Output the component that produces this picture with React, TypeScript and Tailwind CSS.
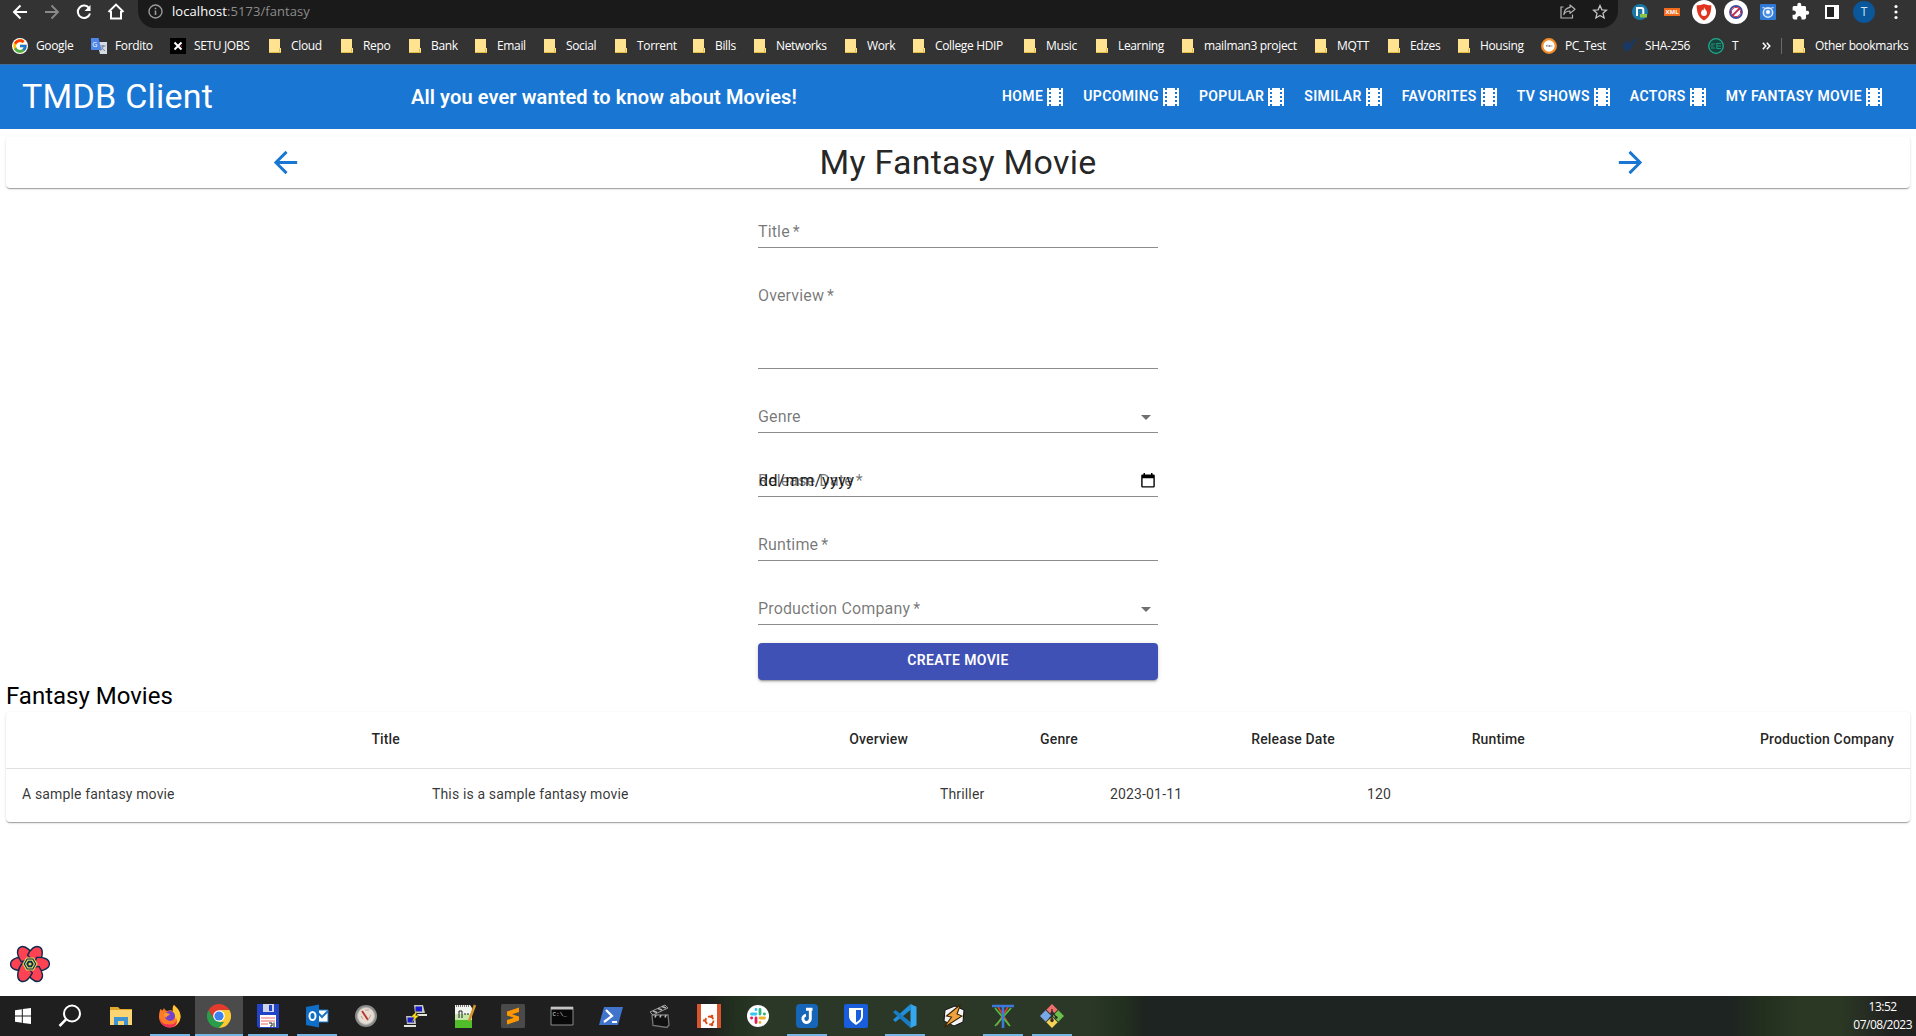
import React from "react";
import { FcGoogle } from "react-icons/fc";

type Children = { children?: React.ReactNode };

const UI_FONT = "font-['Open_Sans','Noto_Sans',sans-serif]";

function Cell({ children }: Children) {
  return <div className="flex h-[23px] w-8 shrink-0 items-center justify-center">{children}</div>;
}

function AddressBar() {
  return (
    <div className="flex h-7 items-start bg-[#333333] pl-1">
      <Cell>
        <svg width="16" height="16" viewBox="0 0 16 16" fill="none" stroke="#fff" strokeWidth="2"><path d="M15 8H2.500M8.500 1.500 2 8l6.500 6.500" /></svg>
      </Cell>
      <Cell>
        <svg width="16" height="16" viewBox="0 0 16 16" fill="none" stroke="#8a8a8a" strokeWidth="1.800"><path d="M1 8h12.500M7.500 1.500 14 8l-6.500 6.500" /></svg>
      </Cell>
      <Cell>
        <svg width="16" height="16" viewBox="0 0 16 16" fill="none" stroke="#fff" strokeWidth="2"><path d="M13.300 4.500A6.200 6.200 0 1 0 14 9.500" /><path d="M14.500 1v6h-6z" fill="#fff" stroke="none" /></svg>
      </Cell>
      <Cell>
        <svg width="18" height="17" viewBox="0 0 18 17" fill="none" stroke="#fff" strokeWidth="2"><path d="M4 8v7.500h10V8M1.500 9 9 1.600 16.500 9" /></svg>
      </Cell>
      <div className="ml-[6px] flex h-7 w-[1480px] items-start rounded-b-[17px] bg-[#1a1a1a]">
        <div className="flex h-[23px] grow items-center pl-[10px]">
          <svg width="15" height="15" viewBox="0 0 15 15" fill="none" stroke="#9a9a9a" strokeWidth="1.400"><circle cx="7.500" cy="7.500" r="6.500" /><path d="M7.500 6.500v4.500M7.500 3.700v1.500" strokeWidth="1.600" /></svg>
          <span className="mb-[2px] ml-[9px] text-[13px] leading-[22px] tracking-[0.06px] whitespace-nowrap text-[#8c8c8c]">
            <span className="text-white">localhost</span>:5173/fantasy
          </span>
        </div>
        <Cell>
          <svg width="16" height="15" viewBox="0 0 16 15" fill="none" stroke="#b4b4b4" strokeWidth="1.200"><path d="M3.500 3H1v11h11.500v-3.500" /><path d="M10 1l5 4.200-5 4.200V7C7 7 5.200 8 3.800 10.500 4.200 6.500 6.500 3.800 10 3.400z" strokeLinejoin="round" /></svg>
        </Cell>
        <Cell>
          <svg width="16" height="16" viewBox="0 0 16 16" fill="none" stroke="#c4c4c4" strokeWidth="1.300"><path d="m8 1.500 1.900 4.300 4.600.4-3.500 3.100 1.100 4.700L8 11.500 3.900 14 5 9.300 1.500 6.200l4.600-.4z" /></svg>
        </Cell>
        <div className="w-[2px]" />
      </div>
      <div className="flex pl-[6px]">
        <Cell>
          <svg width="16" height="16" viewBox="0 0 16 16"><circle cx="8" cy="8" r="8" fill="#1978a8" /><path d="M5 12V4h4.500c1.200 0 1.800.7 1.800 2V10" fill="none" stroke="#fff" strokeWidth="2" /><path d="M8 10h7v3.500H8z" fill="#8bc53f" /></svg>
        </Cell>
        <Cell>
          <div className="flex h-[8px] w-4 items-center justify-center bg-[#f26a1b] text-[6px] leading-none font-bold text-white">XML</div>
        </Cell>
        <Cell>
          <svg className="shrink-0" width="24" height="24" viewBox="0 0 24 24"><circle cx="12" cy="12" r="12" fill="#fff" /><path d="M12 4c2.500 1 4.800 1.300 7.300 1.300 0 7.500-1.700 12-7.300 15.200-5.600-3.200-7.300-7.700-7.300-15.200C7.200 5.300 9.500 5 12 4z" fill="#e2331f" /><path d="M12 7c.5 2.500 3 3 3 6a3 3 0 0 1-6 0c0-1.500 1-2 1.200-3.500l1 1C12 9.500 12 8 12 7z" fill="#fff" /></svg>
        </Cell>
        <Cell>
          <svg className="shrink-0" width="24" height="24" viewBox="0 0 24 24" fill="none"><circle cx="12" cy="12" r="12" fill="#fff" /><circle cx="12" cy="12" r="6" stroke="#3e4c9c" strokeWidth="1.800" /><circle cx="12" cy="12" r="4.600" stroke="#d8304e" strokeWidth="1" /><path d="m8 16 8-8" stroke="#c2304f" strokeWidth="1.800" /></svg>
        </Cell>
        <Cell>
          <svg width="16" height="16" viewBox="0 0 16 16"><rect width="16" height="16" rx="1" fill="#2f7ad6" /><circle cx="8" cy="8.500" r="4.700" fill="#4f90e2" stroke="#dceafc" strokeWidth="1.500" /><path d="M2.500 3.500 6 4.500h4l3.500-1" stroke="#dceafc" strokeWidth="1.200" fill="none" /><circle cx="8" cy="8" r="2" fill="#fff" /></svg>
        </Cell>
        <Cell>
          <svg width="19" height="19" viewBox="0 0 24 24" fill="#fff"><path d="M20.500 11H19V7c0-1.100-.9-2-2-2h-4V3.500a2.500 2.500 0 0 0-5 0V5H4c-1.100 0-1.990.9-1.990 2v3.800H3.500c1.490 0 2.700 1.210 2.700 2.700s-1.210 2.700-2.700 2.700H2V20c0 1.100.9 2 2 2h3.800v-1.500c0-1.490 1.210-2.700 2.700-2.700s2.700 1.210 2.700 2.700V22H17c1.100 0 2-.9 2-2v-4h1.500a2.500 2.500 0 0 0 0-5z" /></svg>
        </Cell>
        <Cell>
          <div className="h-[14px] w-[14px] border-2 border-r-[5px] border-white bg-[#222]" />
        </Cell>
        <Cell>
          <div className="flex h-[22px] w-[22px] shrink-0 items-center justify-center rounded-full bg-[#0a579c] text-[12px] text-[#cfe3f5]">T</div>
        </Cell>
        <Cell>
          <svg width="4" height="16" viewBox="0 0 4 16" fill="#fff"><circle cx="2" cy="2.500" r="1.600" /><circle cx="2" cy="8" r="1.600" /><circle cx="2" cy="13.500" r="1.600" /></svg>
        </Cell>
      </div>
    </div>
  );
}

function Folder() {
  return (
    <svg width="12" height="14" viewBox="0 0 12 14"><path d="M0 0h11v9h1v5H0z" fill="#ffe391" /><path d="M0 13.500h12M10.500 9.500v4" stroke="#e5bd45" fill="none" /></svg>
  );
}

const translateIcon = (
  <svg width="16" height="16" viewBox="0 0 16 16"><path d="M6 4h10v12H9z" fill="#d6dbe2" /><path d="M0 0h7.500l3 12H0z" fill="#4f86ec" /><path d="M9.500 8h5M12 7v1c0 2-1 3.500-2.500 4.500M10.500 9.500c1 1.500 2 2.500 3.500 3" stroke="#6d7d92" fill="none" /><text x="1.300" y="9" fontSize="7" fill="#fff" fontFamily="Open Sans">G</text></svg>
);
const setuIcon = (
  <svg width="16" height="16" viewBox="0 0 16 16"><path fill="#000" d="M0 0h16v16H0z" /><path d="m4.500 4.500 7 7M11.500 4.500l-7 7" stroke="#fff" strokeWidth="2" /><path d="m10.500 7.500 1.500 1" stroke="#d23" /></svg>
);
const clockIcon = (
  <svg width="16" height="16" viewBox="0 0 16 16"><circle cx="8" cy="8" r="6.800" fill="#fff" stroke="#f28c28" strokeWidth="2.300" /><path d="M5 8h6.500M5 8l1.500-1M8.500 7v2" stroke="#777" strokeWidth=".8" fill="none" /></svg>
);
const hashIcon = (
  <svg width="16" height="16" viewBox="0 0 16 16" fill="none" stroke="#173a6b" strokeWidth="2"><path d="m2 9 3-4-1 8 5-9-1 8 6-11" /></svg>
);
const chipIcon = (
  <svg width="16" height="16" viewBox="0 0 16 16" fill="none" stroke="#1fae8d"><circle cx="8" cy="8" r="7.300" fill="#17433d" strokeWidth="1.300" /><path d="M3 6h4M2.500 8h3M3 10h4M9 5.500h4M9 8h4M9 10.500h4M8.800 5v6" strokeWidth=".8" /></svg>
);

const bookmarks: { label: string; slot: string; icon?: React.ReactNode }[] = [
  { label: "Google", slot: "w-[79px]", icon: <FcGoogle size={16} className="rounded-full bg-white" /> },
  { label: "Fordito", slot: "w-[79px]", icon: translateIcon },
  { label: "SETU JOBS", slot: "w-[97px]", icon: setuIcon },
  { label: "Cloud", slot: "w-[72px]" },
  { label: "Repo", slot: "w-[68px]" },
  { label: "Bank", slot: "w-[66px]" },
  { label: "Email", slot: "w-[69px]" },
  { label: "Social", slot: "w-[71px]" },
  { label: "Torrent", slot: "w-[78px]" },
  { label: "Bills", slot: "w-[61px]" },
  { label: "Networks", slot: "w-[91px]" },
  { label: "Work", slot: "w-[68px]" },
  { label: "College HDIP", slot: "w-[111px]" },
  { label: "Music", slot: "w-[72px]" },
  { label: "Learning", slot: "w-[86px]" },
  { label: "mailman3 project", slot: "w-[133px]" },
  { label: "MQTT", slot: "w-[73px]" },
  { label: "Edzes", slot: "w-[70px]" },
  { label: "Housing", slot: "w-[85px]" },
  { label: "PC_Test", slot: "w-[80px]", icon: clockIcon },
  { label: "SHA-256", slot: "w-[87px]", icon: hashIcon },
  { label: "T", slot: "w-[54px]", icon: chipIcon },
];

function BookmarksBar() {
  return (
    <div className="flex h-9 items-center bg-[#333333] pb-px pl-3 text-[12px] tracking-[-0.35px] whitespace-nowrap text-white">
      {bookmarks.map((b) => (
        <div key={b.label} className={`flex shrink-0 items-center gap-2 ${b.slot}`}>
          <span className="flex w-4 shrink-0 justify-center">{b.icon ?? <Folder />}</span>
          <span>{b.label}</span>
        </div>
      ))}
      <svg width="9" height="8" viewBox="0 0 9 8" fill="none" stroke="#fff" strokeWidth="1.500"><path d="m.8.800 3 3.200-3 3.200M4.800.800l3 3.200-3 3.200" /></svg>
      <div className="ml-[10px] h-4 w-px bg-[#6b6b6b]" />
      <div className="ml-[9px] flex items-center gap-2">
        <span className="flex w-4 justify-center"><Folder /></span>
        <span>Other bookmarks</span>
      </div>
    </div>
  );
}

const navItems = ["Home", "Upcoming", "Popular", "Similar", "Favorites", "TV Shows", "Actors", "My Fantasy Movie"];

function AppHeader() {
  return (
    <header className="flex h-[65px] items-center border-t border-[#3f6c98] bg-[#1976d2] pr-[22px] pb-px pl-[22px] text-white">
      <div className="w-[389px] pb-[2px] text-[34px] leading-[42px] tracking-[0.25px]">TMDB Client</div>
      <div className="grow pt-px text-[20px] leading-8 font-semibold tracking-[0.1px]">All you ever wanted to know about Movies!</div>
      <nav className="flex">
        {navItems.map((item) => (
          <a key={item} className="flex items-center px-2 text-[14px] leading-6 font-semibold tracking-[0.37px] whitespace-nowrap uppercase">
            <span className="pb-px">{item}</span>
            <svg className="mt-px" width="24" height="24" viewBox="0 0 24 24" fill="currentColor"><path d="M18 3v2h-2V3H8v2H6V3H4v18h2v-2h2v2h8v-2h2v2h2V3h-2zM8 17H6v-2h2v2zm0-4H6v-2h2v2zm0-4H6V7h2v2zm10 8h-2v-2h2v2zm0-4h-2v-2h2v2zm0-4h-2V7h2v2z" /></svg>
          </a>
        ))}
      </nav>
    </header>
  );
}

const PAPER = "rounded bg-white shadow-[0px_2px_1px_-1px_rgba(0,0,0,0.2),0px_1px_1px_0px_rgba(0,0,0,0.14),0px_1px_3px_0px_rgba(0,0,0,0.12)]";

function PageTitle() {
  return (
    <div className={`mx-[6px] mt-2 flex h-[51px] items-center justify-around ${PAPER}`}>
      <button className="flex w-[51px] justify-center text-[#1976d2]">
        <svg width="35" height="35" viewBox="0 0 24 24" fill="currentColor"><path d="M20 11H7.830l5.590-5.590L12 4l-8 8 8 8 1.410-1.410L7.830 13H20v-2z" /></svg>
      </button>
      <h1 className="mb-[2px] text-[34px] leading-[42px] tracking-[0.25px] text-black/87">My Fantasy Movie</h1>
      <button className="flex w-[51px] justify-center text-[#1976d2]">
        <svg width="35" height="35" viewBox="0 0 24 24" fill="currentColor"><path d="m12 4-1.410 1.410L16.170 11H4v2h12.170l-5.580 5.590L12 20l8-8z" /></svg>
      </button>
    </div>
  );
}

function Field({ label, required, tall, children }: Children & { label: string; required?: boolean; tall?: boolean }) {
  return (
    <div className={`mb-4 flex border-b border-[#8c8c8c] pt-5 text-[16px] leading-[23px] tracking-[0.15px] text-black/54 ${tall ? "h-[105px]" : "h-12"}`}>
      <label className="flex grow gap-[3px] whitespace-nowrap">{label}{required && <span>*</span>}</label>
      {children}
    </div>
  );
}

function Caret() {
  return (
    <svg width="24" height="24" viewBox="0 0 24 24" fill="#6f6f6f"><path d="m7 10 5 5 5-5z" /></svg>
  );
}

function MovieForm() {
  return (
    <form className="mx-auto mt-3 w-[400px]">
      <Field label="Title" required />
      <Field label="Overview" required tall />
      <Field label="Genre"><Caret /></Field>
      <div className="relative">
        <Field label="Release Date" required>
          <svg className="mt-1 mr-[3px]" width="14" height="16" viewBox="0 0 14 16" fill="#000"><path d="M2.500 0h1.500v2h-1.500zM10 0h1.500v2H10z" /><path fillRule="evenodd" d="M1.500 1.500h11a1.300 1.300 0 0 1 1.300 1.300v10.400a1.300 1.300 0 0 1-1.300 1.300h-11A1.300 1.300 0 0 1 .2 13.200V2.800a1.300 1.300 0 0 1 1.300-1.300zM1.600 5.200v8h10.800v-8z" /></svg>
        </Field>
        <span className="absolute top-5 left-[1px] text-[16px] leading-[23px] tracking-[0.6px] text-black/87">dd/mm/yyyy</span>
      </div>
      <Field label="Runtime" required />
      <Field label="Production Company" required><Caret /></Field>
      <div className="pt-[2px]">
        <button
          type="button"
          className="flex h-[37px] w-full items-start justify-center rounded bg-[#3f51b5] pt-[5px] text-[14px] leading-6 font-semibold tracking-[0.36px] text-white shadow-[0px_3px_1px_-2px_rgba(0,0,0,0.2),0px_2px_2px_0px_rgba(0,0,0,0.14),0px_1px_5px_0px_rgba(0,0,0,0.12)]"
        >
          CREATE MOVIE
        </button>
      </div>
    </form>
  );
}

const columns = [
  { title: "Title", value: "A sample fantasy movie" },
  { title: "Overview", value: "This is a sample fantasy movie" },
  { title: "Genre", value: "Thriller" },
  { title: "Release Date", value: "2023-01-11" },
  { title: "Runtime", value: "120" },
  { title: "Production Company", value: "" },
];

function MovieTable() {
  return (
    <section className="mx-[6px] grow">
      <h2 className="text-[24px] leading-8 text-black">Fantasy Movies</h2>
      <div className={PAPER}>
        <div className="grid h-[57px] grid-cols-[410px_508px_170px_257px_190px_369px] items-center border-b border-[#e0e0e0] pb-[3px] text-right text-[14px] leading-6 font-medium tracking-[0.15px] text-black/87">
          {columns.map((c) => <div key={c.title} className="pr-4">{c.title}</div>)}
        </div>
        <div className="grid h-[53px] grid-cols-[410px_508px_170px_257px_190px_369px] items-center pb-[3px] text-[14px] leading-5 tracking-[0.15px] text-black/80">
          {columns.map((c) => <div key={c.title} className="pl-4">{c.value}</div>)}
        </div>
      </div>
    </section>
  );
}

function QueryLogo() {
  return (
    <svg className="mb-[13px] ml-[9px] shrink-0" width="42" height="38" viewBox="-21 -19 42 38">
      {[0, 60, 120, 180, 240, 300].map((a) => (
        <path key={a} transform={`rotate(${a})`} d="M-2-7C-9-8.500-19.400-5.500-19.400 0S-12.500 7-6.500 6.500L-4.500 0z" fill="#ff4154" stroke="#0b2b4c" strokeWidth="1.400" strokeLinejoin="round" />
      ))}
      <path d="M-7 0-3.500-6h7L7 0 3.500 6h-7z" fill="#0b2b4c" stroke="#d9d45c" strokeWidth="1.200" />
      <path d="M-4.400 0-2.200-3.800h4.400L4.400 0 2.200 3.800h-4.400z" fill="none" stroke="#d9d45c" strokeWidth="1.200" />
      <circle r="1.600" fill="#d9d45c" />
    </svg>
  );
}

function Icon({ children }: Children) {
  return <svg width="24" height="24" viewBox="0 0 24 24">{children}</svg>;
}

const taskIcons: { name: string; state?: "open" | "active"; art: React.ReactNode }[] = [
  { name: "start", art: <path d="M4 6.200 10.800 5.200v6.300H4zM11.800 5 20 4v7.500h-8.200zM4 12.500h6.800v6.300L4 17.800zM11.800 12.500H20V20l-8.200-1z" fill="#fff" /> },
  { name: "search", art: <g fill="none" stroke="#fff" strokeWidth="2"><circle cx="14" cy="9.500" r="8" /><path d="M8.300 15.200 1.500 22" strokeWidth="2.500" /></g> },
  { name: "files", art: <><path d="M1 3h8l2 2h12v16H1z" fill="#e0a92c" /><path d="M1 6h22v15H1z" fill="#fbd573" /><path d="M5 13h14v8h-4v-4H9v4H5z" fill="#3f92d2" /></> },
  {
    name: "firefox", state: "open",
    art: <><path d="M2.500 5c1 .4 1.500 1 2 1.800L6 4c.7 1.500 1.500 2.500 3 3 2-1 5-1 6 0C14 4 15 2 16 1c1.500 2 6.500 5 6.500 11.500A10.700 10.700 0 0 1 1 13c0-3 .5-6 1.500-8z" fill="#ff7a25" /><path d="M16 1c1.500 2 6.500 5 6.500 11.500 0 4-2.500 8-6.500 9.500 4-5 1-10-1-12 0-4-.5-7 1-9z" fill="#ffc935" /><path d="M1.500 13c1 5 4.500 8 8 7 6 2 10-2 9-7 2 7-2 10.500-7 10.500C5 23.500 1.500 18 1.500 13z" fill="#f0305c" /><circle cx="12" cy="12" r="5" fill="#7542c9" /><path d="M6 10c2-2 5-1 6 1-2 0-3 1-3.500 2.500C7 13 6 12 6 10z" fill="#ff9a2f" /></>,
  },
  {
    name: "chrome", state: "active",
    art: <><path d="M12 12 1.600 6A12 12 0 0 1 22.400 6z" fill="#e33b2e" /><path d="M12 12 22.400 6A12 12 0 0 1 12 24z" fill="#fcc934" /><path d="M12 6h10.400L17.200 15z" fill="#fcc934" /><path d="M1.600 6h10.400v3L7 15z" fill="#e33b2e" /><path d="M1.600 6 6.800 15 12 18h5.200L12 24A12 12 0 0 1 1.600 6z" fill="#2a9d4b" /><circle cx="12" cy="12" r="5.800" fill="#fff" /><circle cx="12" cy="12" r="4.600" fill="#3b82f0" /></>,
  },
  { name: "commander", state: "open", art: <><path d="M1 0h22v24H3l-2-2z" fill="#2444c8" /><path d="M7 0h11v8H7z" fill="#cdd5e6" /><path d="M13 1h3v6h-3z" fill="#2444c8" /><path d="M4 11h16v12H4z" fill="#fff" /><path d="M5 14h14M5 17h14M5 20h7" stroke="#e66" /><path d="M13 19h3v3h-2M18 18.500V23" stroke="#222" fill="none" /></> },
  { name: "outlook", state: "open", art: <><path d="M12 6h11v12H12z" fill="#fff" stroke="#1b74c4" /><path d="m12 8 5 5 6-6" fill="none" stroke="#1b74c4" strokeWidth="2" /><path d="m1 3 13-2.500v23L1 21z" fill="#0f6fc6" /><ellipse cx="7.500" cy="12" rx="3" ry="4" fill="none" stroke="#fff" strokeWidth="2" /></> },
  { name: "gauge", art: <><circle cx="12" cy="12" r="11" fill="#8b8b87" /><circle cx="12" cy="12" r="8.500" fill="#e6ddd2" stroke="#bbb" /><path d="m8 7 6 9" stroke="#b8322a" strokeWidth="1.800" /><path d="m14 16 3-5M7 12l2 3M11 6h4" stroke="#c99" /></> },
  { name: "putty", art: <><path d="M11 1h9l2 8H12zM3 12h9l1 8H4z" fill="#c5c7c0" /><path d="M12.500 2.500h6.500v5h-6.500zM4.500 13.500H11v5H4.500z" fill="#1a1ad0" /><path d="M14 10h10v2H15zM1 21h12v2H1z" fill="#e4e4da" /><path d="m14 7-6 6h3.500l-2.500 5 7-6.500h-3.500z" fill="#ffe11a" stroke="#8a7a00" strokeWidth=".4" /></> },
  { name: "notes", art: <><path d="M3 1h15l2 3v20H3z" fill="#f2f5ee" /><path d="M3 15h17v9H3z" fill="#52bd2a" /><path d="M3 10h17v6H3z" fill="#c5e8a8" /><path d="M4 2h14" stroke="#777" strokeDasharray="1 1" strokeWidth="2" /><path d="M7 14V7h3v7M12 10h2M15 10h2" stroke="#222" fill="none" /><path d="M23 1 17 17" stroke="#d6942a" strokeWidth="2.500" /></> },
  { name: "sublime", art: <><rect width="24" height="24" rx="1.500" fill="#4a4a4a" /><path d="m6 7.500 12-4V8l-7 2.200 7 2.300v4L6 20.500V16l7-2.300-7-2.200z" fill="#ff9800" /></> },
  { name: "terminal", art: <><path d="M1 3h22v18H1z" fill="#080808" stroke="#8b8b8b" /><path d="M1 3h22v2.500H1z" fill="#c4c4c4" /><text x="2.500" y="12" fontSize="6" fill="#ddd" fontFamily="Liberation Mono">C:\_</text></> },
  { name: "powershell", art: <><path d="M5 3h19l-5 18H0z" fill="#4075cb" /><path d="m7 6 6 6-8 6M13 18h5" fill="none" stroke="#fff" strokeWidth="2.200" /></> },
  { name: "clapper", art: <><path d="M4 11h16l1 10-2 2.500L5 21.500z" fill="#111" stroke="#777" strokeWidth="1.300" /><path d="m2 8 15-7 3 3L5 11z" fill="#222" stroke="#999" /><path d="m5 7 4 1.500M10 4.500l4 1.500M14 2.500 18 4M8 11l-1 2.500M13 11l-1 2.500M18 11l-1 2.500" stroke="#b4b4b4" strokeWidth="1.600" /></> },
  { name: "ubuntu", art: <><path d="M0 0h24v24H0z" fill="#fff" /><path d="M0 0h4v24H0zM20 0h4v24h-4z" fill="#d9532c" /><circle cx="12.500" cy="16.500" r="4" fill="none" stroke="#dd4814" strokeWidth="1.800" strokeDasharray="6.400 2" /><g fill="#dd4814"><circle cx="7.200" cy="16.500" r="1.300" /><circle cx="15" cy="12" r="1.300" /><circle cx="15" cy="21" r="1.300" /></g></> },
  {
    name: "slack",
    art: <><circle cx="12" cy="12" r="11" fill="#fff" /><g strokeWidth="2.800" strokeLinecap="round"><path d="M5.500 10H10M10 5.500v.2" stroke="#36c5f0" /><path d="M14 5.500V10M18.500 10h-.2" stroke="#2eb67d" /><path d="M14 14h4.500M14 18.500v-.2" stroke="#ecb22e" /><path d="M10 14v4.500M5.500 14h.2" stroke="#e01e5a" /></g></>,
  },
  { name: "joplin", state: "open", art: <><rect x="1" width="22" height="24" rx="4" fill="#1565b8" /><path d="M11 5.200H17.500M15.300 5v9.800a3.700 3.700 0 1 1-4.300-3.700" fill="none" stroke="#fff" strokeWidth="2.900" /></> },
  { name: "bitwarden", art: <><rect width="24" height="24" rx="2" fill="#175ddc" /><path d="M5 4h14v8c0 4-3 6.500-7 9-4-2.500-7-5-7-9z" fill="#fff" /><path d="M12 6h5v6c0 3-2 4.500-5 6.500z" fill="#175ddc" /></> },
  { name: "code", state: "open", art: <><path d="m17.500 6-15 12L0 15.800 17.500 0z" fill="#1f8fd8" /><path d="m17.500 18-15-12L0 8.200 17.500 24z" fill="#1a7cc2" /><path d="M17.500 0 23.500 2.700v18.600l-6 2.700z" fill="#35a7ee" /></> },
  { name: "winamp", art: <><path d="m3 6 10-4 9 4-1 12-9 4-10-5z" fill="#f4f4f4" stroke="#111" /><path d="M18.500.500 4.500 12l5 1-7.500 10.500L20 12l-5-2z" fill="#f0a23c" stroke="#3a2300" strokeWidth="1.100" /></> },
  { name: "tower", state: "open", art: <g fill="none" strokeWidth="1.700"><path d="M7 3 18 21M17 3 6 21" stroke="#e03b3b" /><path d="M4 4 19 22M20 4 4 22" stroke="#48c43c" /><path d="M1 2h22M12 2v22" stroke="#3c79dd" strokeWidth="2.600" /></g> },
  { name: "git", state: "open", art: <g transform="rotate(45 12 12)"><path d="M3.500 3.500h8v8h-8z" fill="#ef6f6f" /><path d="M12.500 3.500h8v8h-8z" fill="#6cc04a" /><path d="M3.500 12.500h8v8h-8z" fill="#79a9e8" /><path d="M12.500 12.500h8v8h-8z" fill="#f6d155" /><path d="M7 7l8 8M9 9l7 1M12 12v4" stroke="#2c2c2c" strokeWidth="1.300" /><circle cx="15" cy="15" r="1.800" fill="#2c2c2c" /><circle cx="16" cy="10" r="1.400" fill="#2c2c2c" /><circle cx="10" cy="10" r="1.700" fill="#2c2c2c" /></g> },
];

function Taskbar() {
  return (
    <footer className="flex h-10 shrink-0 bg-[linear-gradient(90deg,#1f1f1f_0,#1f1f1f_705px,#22301f_735px,#2b3727_760px,#2b3727_1090px,#22301f_1125px,#1e2421_1145px,#1e2421_1730px,#23301e_1765px,#2b3824_1800px,#2b3824_1840px,#212220_1890px)] pr-1">
      {taskIcons.map((t) => (
        <div key={t.name} className={`relative mr-px flex w-12 shrink-0 items-center justify-center first:mr-0 first:w-[46px] nth-2:mr-[3px] ${t.state === "active" ? "bg-[#4b4b4b]" : ""}`}>
          <Icon>{t.art}</Icon>
          {t.state && <span className={`absolute bottom-0 h-[2px] bg-[#76b4e4] ${t.state === "active" ? "w-12" : "w-10"}`} />}
        </div>
      ))}
      <div className="ml-auto flex flex-col items-center pt-[2px] text-[12px] leading-[18px] tracking-[-0.5px] text-white">
        <span>13:52</span>
        <span>07/08/2023</span>
      </div>
    </footer>
  );
}

export default function App() {
  return (
    <div className="flex h-[1036px] w-[1916px] flex-col overflow-hidden bg-white font-[Roboto,sans-serif]">
      <div className={UI_FONT}>
        <AddressBar />
        <BookmarksBar />
      </div>
      <AppHeader />
      <PageTitle />
      <MovieForm />
      <MovieTable />
      <QueryLogo />
      <div className={UI_FONT}>
        <Taskbar />
      </div>
    </div>
  );
}
